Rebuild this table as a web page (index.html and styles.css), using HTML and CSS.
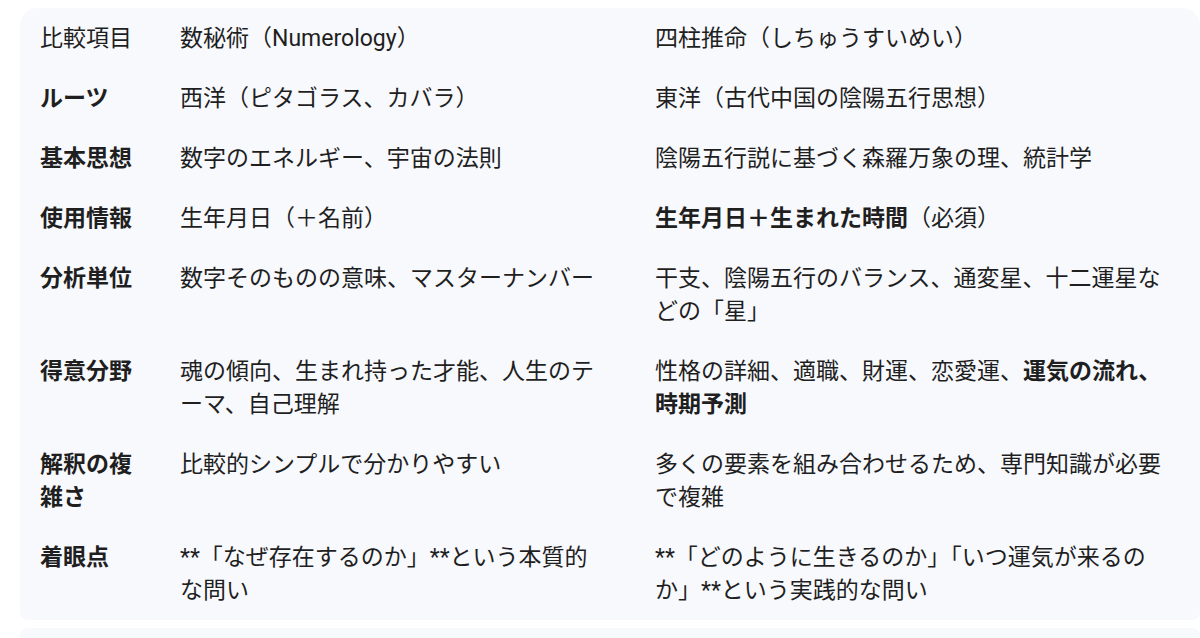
FILE: index.html
```html
<!DOCTYPE html>
<html lang="ja">
<head>
<meta charset="utf-8">
<link rel="stylesheet" href="styles.css">
</head>
<body>
<div class="wrap">
  <table class="cmp">
    <colgroup>
      <col class="c1"><col class="c2"><col class="c3">
    </colgroup>
    <thead>
      <tr><th>比較項目</th><th class="m">数秘術（Numerology）</th><th>四柱推命（しちゅうすいめい）</th></tr>
    </thead>
    <tbody>
      <tr><td class="k">ルーツ</td><td class="m">西洋（ピタゴラス、カバラ）</td><td>東洋（古代中国の陰陽五行思想）</td></tr>
      <tr><td class="k">基本思想</td><td class="m">数字のエネルギー、宇宙の法則</td><td>陰陽五行説に基づく森羅万象の理、統計学</td></tr>
      <tr><td class="k">使用情報</td><td class="m">生年月日（＋名前）</td><td><b>生年月日＋生まれた時間</b>（必須）</td></tr>
      <tr><td class="k">分析単位</td><td class="m">数字そのものの意味、マスターナンバー</td><td>干支、陰陽五行のバランス、通変星、十二運星などの「星」</td></tr>
      <tr><td class="k">得意分野</td><td class="m">魂の傾向、生まれ持った才能、人生のテーマ、自己理解</td><td>性格の詳細、適職、財運、恋愛運、<b>運気の流れ、時期予測</b></td></tr>
      <tr><td class="k">解釈の複雑さ</td><td class="m">比較的シンプルで分かりやすい</td><td>多くの要素を組み合わせるため、専門知識が必要で複雑</td></tr>
      <tr><td class="k">着眼点</td><td class="m">**「なぜ存在するのか」**という本質的な問い</td><td>**「どのように生きるのか」「いつ運気が来るのか」**という実践的な問い</td></tr>
    </tbody>
  </table>
</div>
<div class="next"></div>
</body>
</html>
```
FILE: styles.css
```css
html, body {
  margin: 0;
  padding: 0;
  background: #ffffff;
}
body {
  padding: 8px 0 0 20px;
  font-family: Roboto, "Noto Sans CJK JP", sans-serif;
  color: #1f1f1f;
  overflow: hidden;
}
.wrap {
  width: 1180px;
  background: #f8f9fd;
  border-radius: 18px 18px 8px 8px;
  overflow: hidden;
}
.cmp {
  width: 1180px;
  border-collapse: collapse;
  table-layout: fixed;
  font-size: 23px;
  line-height: 33px;
}
.c1 { width: 140px; }
.c2 { width: 475px; }
.c3 { width: 565px; }
.cmp th,
.cmp td {
  padding: 13.5px 20px;
  text-align: left;
  vertical-align: top;
  font-weight: 400;
}
.cmp th.m,
.cmp td.m {
  padding-right: 40px;
}
.cmp td.k,
.cmp b {
  font-weight: 700;
}
.next {
  width: 1180px;
  height: 40px;
  margin-top: 8px;
  background: #f8f9fd;
  border-radius: 8px;
}
```
